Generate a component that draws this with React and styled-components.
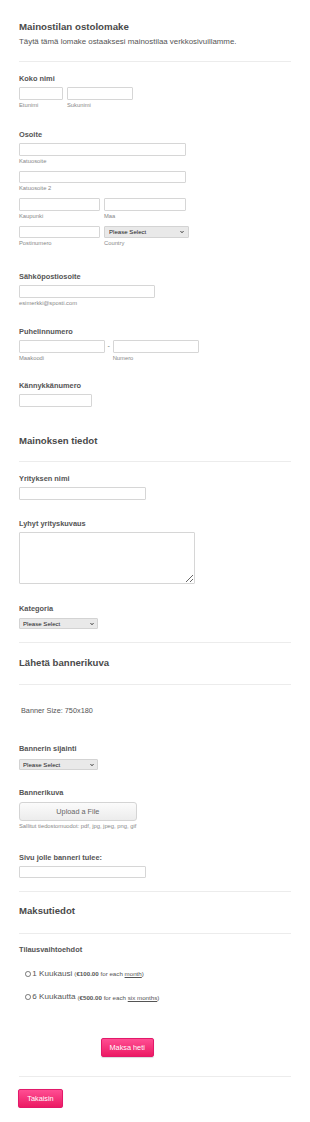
import React from "react";
import styled, { createGlobalStyle } from "styled-components";

const GlobalStyle = createGlobalStyle`
  html, body { margin: 0; padding: 0; background: #fff; }
  body { font-family: "Liberation Sans", Arial, sans-serif; color: #555; }
`;

const Page = styled.div`
  box-sizing: border-box;
  width: 310px;
  padding: 21px 19px 0;
  font-family: "Liberation Sans", Arial, sans-serif;
`;

const FormTitle = styled.h1`
  margin: 0;
  font-size: 9.7px;
  line-height: 12px;
  font-weight: bold;
  color: #4a4a4a;
`;

const Subtitle = styled.p`
  margin: 4px 0 0;
  font-size: 7.9px;
  line-height: 10px;
  color: #555;
`;

const Divider = styled.div`
  height: 1px;
  background: #ececec;
  margin-top: ${(p) => p.$mt}px;
`;

const Field = styled.div`
  margin-top: ${(p) => p.$mt}px;
`;

const Label = styled.div`
  font-size: 7.4px;
  line-height: 10px;
  font-weight: bold;
  color: #555;
`;

const Row = styled.div`
  display: flex;
  align-items: flex-start;
  gap: ${(p) => p.$gap ?? 4}px;
  margin-top: ${(p) => p.$mt ?? 3.3}px;
`;

const Col = styled.div`
  display: flex;
  flex-direction: column;
  width: ${(p) => p.$w}px;
`;

const Input = styled.input`
  box-sizing: border-box;
  display: block;
  width: ${(p) => p.$w}px;
  height: 12.5px;
  margin: ${(p) => p.$mt ?? 0}px 0 0;
  padding: 0 2px;
  border: 1px solid #d6d6d6;
  border-radius: 1px;
  background: #fff;
  font-size: 7px;
  outline: none;
`;

const TextArea = styled.textarea`
  box-sizing: border-box;
  display: block;
  width: 176px;
  height: 51.5px;
  margin: 3.3px 0 0;
  padding: 2px;
  border: 1px solid #d6d6d6;
  border-radius: 1px;
  font-size: 7px;
  outline: none;
`;

const SubLabel = styled.div`
  margin-top: 1px;
  font-size: 5.8px;
  line-height: 8px;
  color: #888;
  white-space: nowrap;
`;

const Dash = styled.span`
  width: 8px;
  text-align: center;
  font-size: 7px;
  line-height: 12.5px;
  color: #777;
`;

const SelectBox = styled.div`
  position: relative;
  width: ${(p) => p.$w}px;
  height: ${(p) => p.$h}px;
  margin-top: ${(p) => p.$mt ?? 0}px;
`;

const Select = styled.select`
  box-sizing: border-box;
  display: block;
  width: 100%;
  height: 100%;
  margin: 0;
  padding: 0 0 0 ${(p) => p.$pl ?? 3}px;
  appearance: none;
  -webkit-appearance: none;
  border: 1px solid #d3d3d3;
  border-radius: 1px;
  background: #e9e9e9;
  font-family: "Liberation Sans", Arial, sans-serif;
  font-size: 6.1px;
  color: #1a1a1a;
  outline: none;
`;

const Chevron = styled.svg`
  position: absolute;
  right: ${(p) => p.$r ?? 4}px;
  top: 50%;
  width: 4px;
  height: 3px;
  transform: translateY(-50%);
  pointer-events: none;
`;

const SectionTitle = styled.h2`
  margin: ${(p) => p.$mt}px 0 0;
  font-size: 9.6px;
  line-height: 12px;
  font-weight: bold;
  color: #4a4a4a;
`;

const Note = styled.p`
  margin: ${(p) => p.$mt}px 0 0 2px;
  font-size: 7.3px;
  line-height: 10px;
  color: #555;
`;

const UploadButton = styled.button`
  box-sizing: border-box;
  display: block;
  width: 117.7px;
  height: 19px;
  margin-top: 4px;
  padding: 0;
  border: 1px solid #d4d4d4;
  border-radius: 3px;
  background: linear-gradient(#fbfbfb, #ececec);
  font-family: "Liberation Sans", Arial, sans-serif;
  font-size: 7.3px;
  color: #666;
`;

const RadioRow = styled.label`
  display: flex;
  align-items: center;
  height: 12px;
  margin-top: ${(p) => p.$mt}px;
  padding-left: 6px;
  color: #555;
  white-space: nowrap;
`;

const Radio = styled.input`
  appearance: none;
  -webkit-appearance: none;
  box-sizing: border-box;
  width: 5.7px;
  height: 5.7px;
  margin: 0 1.6px 0 0;
  border: 0.7px solid #777;
  border-radius: 50%;
  background: #fff;
`;

const OptionName = styled.span`
  font-size: 8.1px;
  line-height: 12px;
  color: #555;
`;

const Price = styled.span`
  margin-left: 2px;
  font-size: 6.2px;
  color: #555;
  b { font-weight: bold; }
  u { text-decoration: underline; }
`;

const PinkButton = styled.button`
  box-sizing: border-box;
  display: block;
  width: ${(p) => p.$w}px;
  height: ${(p) => p.$h}px;
  margin: ${(p) => p.$mt}px 0 0 ${(p) => p.$ml ?? 0}px;
  padding: 0;
  border: 1px solid #e2196a;
  border-radius: 2px;
  background: linear-gradient(#ff4e93, #ec1a63);
  box-shadow: 0 0.5px 1px rgba(0, 0, 0, 0.15);
  font-family: "Liberation Sans", Arial, sans-serif;
  font-size: 7.3px;
  color: #fff;
`;

const ChevronIcon = ({ r }) => (
  <Chevron $r={r} viewBox="0 0 8 6">
    <path d="M1 1.2 L4 4.4 L7 1.2" fill="none" stroke="#222" strokeWidth="1.8" />
  </Chevron>
);

export default function App() {
  return (
    <>
      <GlobalStyle />
      <Page>
        <FormTitle>Mainostilan ostolomake</FormTitle>
        <Subtitle>Täytä tämä lomake ostaaksesi mainostilaa verkkosivuillamme.</Subtitle>
        <Divider $mt={14} />

        <Field $mt={12}>
          <Label>Koko nimi</Label>
          <Row>
            <Col $w={44}>
              <Input $w={44} />
              <SubLabel>Etunimi</SubLabel>
            </Col>
            <Col $w={66}>
              <Input $w={66} />
              <SubLabel>Sukunimi</SubLabel>
            </Col>
          </Row>
        </Field>

        <Field $mt={21}>
          <Label>Osoite</Label>
          <Row>
            <Col $w={166.7}>
              <Input $w={166.7} />
              <SubLabel>Katuosoite</SubLabel>
            </Col>
          </Row>
          <Row $mt={6}>
            <Col $w={166.7}>
              <Input $w={166.7} />
              <SubLabel>Katuosoite 2</SubLabel>
            </Col>
          </Row>
          <Row $mt={6}>
            <Col $w={81}>
              <Input $w={81} />
              <SubLabel>Kaupunki</SubLabel>
            </Col>
            <Col $w={81.7}>
              <Input $w={81.7} />
              <SubLabel>Maa</SubLabel>
            </Col>
          </Row>
          <Row $mt={6}>
            <Col $w={81}>
              <Input $w={81} />
              <SubLabel>Postinumero</SubLabel>
            </Col>
            <Col $w={84.7}>
              <SelectBox $w={84.7} $h={12}>
                <Select $pl={4}>
                  <option>Please Select</option>
                </Select>
                <ChevronIcon r={4.5} />
              </SelectBox>
              <SubLabel>Country</SubLabel>
            </Col>
          </Row>
        </Field>

        <Field $mt={25}>
          <Label>Sähköpostiosoite</Label>
          <Row>
            <Col $w={135.7}>
              <Input $w={135.7} />
              <SubLabel>esimerkki@sposti.com</SubLabel>
            </Col>
          </Row>
        </Field>

        <Field $mt={20}>
          <Label>Puhelinnumero</Label>
          <Row $gap={0}>
            <Col $w={85.7}>
              <Input $w={85.7} />
              <SubLabel>Maakoodi</SubLabel>
            </Col>
            <Dash>-</Dash>
            <Col $w={86.7}>
              <Input $w={86.7} />
              <SubLabel>Numero</SubLabel>
            </Col>
          </Row>
        </Field>

        <Field $mt={19.5}>
          <Label>Kännykkänumero</Label>
          <Input $w={73.3} $mt={3.3} />
        </Field>

        <SectionTitle $mt={27.7}>Mainoksen tiedot</SectionTitle>
        <Divider $mt={14.6} />

        <Field $mt={11.7}>
          <Label>Yrityksen nimi</Label>
          <Input $w={127} $mt={3.3} />
        </Field>

        <Field $mt={19}>
          <Label>Lyhyt yrityskuvaus</Label>
          <TextArea />
        </Field>

        <Field $mt={20.4}>
          <Label>Kategoria</Label>
          <SelectBox $w={78.7} $h={11} $mt={4.3}>
            <Select>
              <option>Please Select</option>
            </Select>
            <ChevronIcon r={3.5} />
          </SelectBox>
        </Field>

        <Divider $mt={13} />
        <SectionTitle $mt={13.4}>Lähetä bannerikuva</SectionTitle>
        <Divider $mt={15} />

        <Note $mt={21.3}>Banner Size: 750x180</Note>

        <Field $mt={28.3}>
          <Label>Bannerin sijainti</Label>
          <SelectBox $w={78.7} $h={11} $mt={5}>
            <Select>
              <option>Please Select</option>
            </Select>
            <ChevronIcon r={3.5} />
          </SelectBox>
        </Field>

        <Field $mt={18}>
          <Label>Bannerikuva</Label>
          <UploadButton type="button">Upload a File</UploadButton>
          <SubLabel>Sallitut tiedostomuodot: pdf, jpg, jpeg, png, gif</SubLabel>
        </Field>

        <Field $mt={22.7}>
          <Label>Sivu jolle banneri tulee:</Label>
          <Input $w={127} $mt={2.7} />
        </Field>

        <Divider $mt={13.1} />
        <SectionTitle $mt={13}>Maksutiedot</SectionTitle>
        <Divider $mt={15.4} />

        <Field $mt={11.6}>
          <Label>Tilausvaihtoehdot</Label>
          <RadioRow $mt={12.7}>
            <Radio type="radio" name="plan" />
            <OptionName>1 Kuukausi</OptionName>
            <Price>
              (<b>€100.00</b> for each <u>month</u>)
            </Price>
          </RadioRow>
          <RadioRow $mt={11.3}>
            <Radio type="radio" name="plan" />
            <OptionName>6 Kuukautta</OptionName>
            <Price>
              (<b>€500.00</b> for each <u>six months</u>)
            </Price>
          </RadioRow>
        </Field>

        <PinkButton type="button" $w={53} $h={18.7} $mt={34.7} $ml={81.7}>
          Maksa heti
        </PinkButton>

        <Divider $mt={19.6} />

        <PinkButton type="button" $w={44.4} $h={19} $mt={11.7} $ml={-0.7}>
          Takaisin
        </PinkButton>
      </Page>
    </>
  );
}
